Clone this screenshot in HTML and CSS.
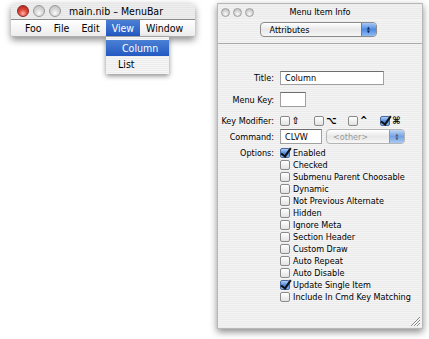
FILE: index.html
```html
<!DOCTYPE html>
<html lang="en">
<head>
    <meta charset="UTF-8">
    <title>main.nib - MenuBar</title>
    <link rel="stylesheet" href="styles.css">
</head>
<body>
    <div class="desk">
        <div class="win nib">
            <div class="nib-title">
                <span class="lights">
                    <i class="light red"></i><i class="light"></i><i class="light"></i>
                </span>
                <span class="nib-name">main.nib &ndash; MenuBar</span>
            </div>
            <div class="menubar">
                <span class="mi">Foo</span>
                <span class="mi">File</span>
                <span class="mi">Edit</span>
                <span class="mi on">View</span>
                <span class="mi">Window</span>
            </div>
        </div>

        <div class="dropdown">
            <div class="dd-item on">Column</div>
            <div class="dd-item">List</div>
        </div>

        <div class="win panel">
            <div class="panel-title">
                <span class="lights small">
                    <i class="light"></i><i class="light"></i><i class="light"></i>
                </span>
                <span class="panel-name">Menu Item Info</span>
            </div>
            <div class="panel-top">
                <div class="popup wide">
                    <span>Attributes</span>
                    <span class="cap"><b>&#9650;</b><b>&#9660;</b></span>
                </div>
            </div>
            <div class="form">
                <div class="row r-title">
                    <label>Title:</label>
                    <div class="field long">Column</div>
                </div>
                <div class="row r-key">
                    <label>Menu Key:</label>
                    <div class="field short"></div>
                </div>
                <div class="row r-mod">
                    <label>Key Modifier:</label>
                    <div class="mods">
                        <span class="mod"><i class="box"></i>&#8679;</span>
                        <span class="mod"><i class="box"></i>&#8997;</span>
                        <span class="mod"><i class="box"></i>^</span>
                        <span class="mod"><i class="box checked"></i>&#8984;</span>
                    </div>
                </div>
                <div class="row r-cmd">
                    <label>Command:</label>
                    <div class="field cmd">CLVW</div>
                    <div class="popup off">
                        <span>&lt;other&gt;</span>
                        <span class="cap"><b>&#9650;</b><b>&#9660;</b></span>
                    </div>
                </div>
                <div class="row r-opt">
                    <label>Options:</label>
                    <ul class="opts">
                        <li><i class="box checked"></i>Enabled</li>
                        <li><i class="box"></i>Checked</li>
                        <li><i class="box"></i>Submenu Parent Choosable</li>
                        <li><i class="box"></i>Dynamic</li>
                        <li><i class="box"></i>Not Previous Alternate</li>
                        <li><i class="box"></i>Hidden</li>
                        <li><i class="box"></i>Ignore Meta</li>
                        <li><i class="box"></i>Section Header</li>
                        <li><i class="box"></i>Custom Draw</li>
                        <li><i class="box"></i>Auto Repeat</li>
                        <li><i class="box"></i>Auto Disable</li>
                        <li><i class="box checked"></i>Update Single Item</li>
                        <li><i class="box"></i>Include In Cmd Key Matching</li>
                    </ul>
                </div>
            </div>
            <svg class="grip" width="12" height="12" viewBox="0 0 12 12">
                <path d="M11 2 L2 11 M11 5 L5 11 M11 8 L8 11" stroke="#888" stroke-width="1"/>
                <path d="M11 3 L3 11 M11 6 L6 11 M11 9 L9 11" stroke="#fff" stroke-width="1"/>
            </svg>
        </div>
    </div>
</body>
</html>
```

FILE: styles.css
```css
body {
    margin: 0;
    background: #fff;
    font-family: "DejaVu Sans Condensed", "DejaVu Sans", "Liberation Sans", sans-serif;
    color: #000;
}
.desk {
    position: relative;
    width: 429px;
    height: 339px;
    overflow: hidden;
}
.win {
    position: absolute;
    box-shadow: 0 3px 7px rgba(0, 0, 0, 0.45);
}

/* nib window */
.nib {
    left: 11px;
    top: 3px;
    width: 184px;
    border-radius: 5px 5px 2px 2px;
}
.nib-title {
    height: 17px;
    display: flex;
    align-items: center;
    border-radius: 5px 5px 0 0;
    background: repeating-linear-gradient(#e6e6e6 0 1px, #eeeeee 1px 2px);
    border-bottom: 1px solid #8a8a8a;
    box-sizing: border-box;
}
.lights {
    display: flex;
    gap: 4px;
    padding-left: 6px;
}
.light {
    width: 12px;
    height: 12px;
    border-radius: 50%;
    box-sizing: border-box;
    border: 1px solid #9a9a9a;
    background: radial-gradient(circle at 50% 70%, #fafafa 0, #d8d8d8 45%, #b8b8b8 100%);
}
.light.red {
    border-color: #8a2a22;
    background: radial-gradient(circle at 50% 75%, #ffb3a8 0, #e0463a 45%, #a51d14 100%);
}
.nib-name {
    font-size: 10.5px;
    margin-left: 8px;
}
.menubar {
    height: 17px;
    display: flex;
    align-items: stretch;
    padding-left: 8px;
    background: linear-gradient(#ffffff, #ececec);
    border-radius: 0 0 2px 2px;
    border-bottom: 1px solid #b0b0b0;
    box-sizing: border-box;
    font-size: 10.5px;
}
.mi {
    display: flex;
    align-items: center;
    padding: 0 6px;
}
.mi.on {
    background: linear-gradient(#4b80d6, #2459c2);
    color: #fff;
}
.dropdown {
    position: absolute;
    left: 106px;
    top: 37px;
    width: 63px;
    padding: 3px 0 2px;
    background: repeating-linear-gradient(#f6f6f6 0 1px, #ececec 1px 2px);
    box-shadow: 0 2px 5px rgba(0, 0, 0, 0.45);
    font-size: 10.5px;
}
.dd-item {
    height: 16px;
    display: flex;
    align-items: center;
    padding-left: 12px;
}
.dd-item.on {
    background: linear-gradient(#4b80d6, #2459c2);
    color: #fff;
    padding-left: 16px;
}

/* info panel */
.panel {
    left: 217px;
    top: 3px;
    width: 206px;
    height: 326px;
    border: 1px solid #b8b8b8;
    box-sizing: border-box;
    background: repeating-linear-gradient(#f4f4f4 0 1px, #ebebeb 1px 2px);
    font-size: 9px;
}
.panel-title {
    height: 16px;
    display: flex;
    align-items: center;
    position: relative;
    background: repeating-linear-gradient(#eaeaea 0 1px, #f2f2f2 1px 2px);
}
.lights.small {
    gap: 3px;
    padding-left: 3px;
}
.lights.small .light {
    width: 9px;
    height: 9px;
    border-color: #a0a0a0;
}
.panel-name {
    position: absolute;
    left: 0;
    right: 0;
    text-align: center;
    font-size: 9px;
    pointer-events: none;
}
.panel-top {
    height: 21px;
    display: flex;
    justify-content: center;
    padding-top: 2px;
    border-bottom: 1px solid #a8a8a8;
}
.popup {
    height: 15px;
    display: flex;
    align-items: center;
    justify-content: space-between;
    box-sizing: border-box;
    border: 1px solid #8c8c8c;
    border-radius: 4px;
    background: linear-gradient(#ffffff, #e8e8e8 50%, #f6f6f6);
    padding-left: 9px;
    overflow: hidden;
}
.popup.wide {
    width: 117px;
    margin-left: -4px;
}
.popup.off {
    width: 79px;
    margin-left: 4px;
    color: #9a9a9a;
    border-color: #b4b4b4;
    padding-left: 6px;
}
.cap {
    width: 14px;
    height: 100%;
    display: flex;
    flex-direction: column;
    align-items: center;
    justify-content: center;
    background: linear-gradient(#a9c8f4, #4d8be4 50%, #8fbbf2);
    border-left: 1px solid #5a7fbf;
    font-size: 4px;
    line-height: 4px;
    color: #102040;
}
.popup.off .cap {
    opacity: 0.75;
}
.cap b {
    font-weight: normal;
}
.form {
    display: flex;
    flex-direction: column;
}
.row {
    display: flex;
    align-items: center;
}
.row label {
    width: 56px;
    flex: none;
    text-align: right;
    margin-right: 6px;
}
.r-title {
    margin-top: 27px;
    height: 14px;
}
.r-key {
    margin-top: 7px;
    height: 15px;
}
.r-mod {
    margin-top: 8px;
    height: 11px;
}
.r-cmd {
    margin-top: 3px;
    height: 15px;
}
.r-opt {
    margin-top: 3px;
    align-items: flex-start;
}
.field {
    height: 100%;
    box-sizing: border-box;
    background: #fff;
    border: 1px solid #a0a0a0;
    border-top-color: #6e6e6e;
    display: flex;
    align-items: center;
    padding-left: 4px;
}
.field.long {
    width: 104px;
}
.field.short {
    width: 26px;
}
.field.cmd {
    width: 42px;
}
.mods {
    display: flex;
}
.mod {
    display: flex;
    align-items: center;
    gap: 2px;
    width: 34px;
    font-size: 10px;
    font-weight: bold;
}
.mod:last-child {
    width: auto;
    margin-left: -2px;
}
.box {
    width: 10px;
    height: 10px;
    flex: none;
    box-sizing: border-box;
    border: 1px solid #8a8a8a;
    border-radius: 2px;
    background: linear-gradient(#ffffff, #e2e2e2);
    position: relative;
}
.box.checked {
    background: linear-gradient(#b3d0f6, #4a86dc 55%, #8ab8f0);
    border-color: #4a6a9e;
}
.box.checked::after {
    content: "";
    position: absolute;
    left: 2px;
    top: -3px;
    width: 4px;
    height: 9px;
    border-right: 2px solid #111;
    border-bottom: 2px solid #111;
    transform: rotate(35deg);
}
.opts {
    list-style: none;
    margin: 0;
    padding: 0;
}
.opts li {
    height: 12px;
    display: flex;
    align-items: center;
    gap: 3px;
}
.r-opt label {
    line-height: 12px;
}
.grip {
    position: absolute;
    right: 1px;
    bottom: 1px;
}
```
